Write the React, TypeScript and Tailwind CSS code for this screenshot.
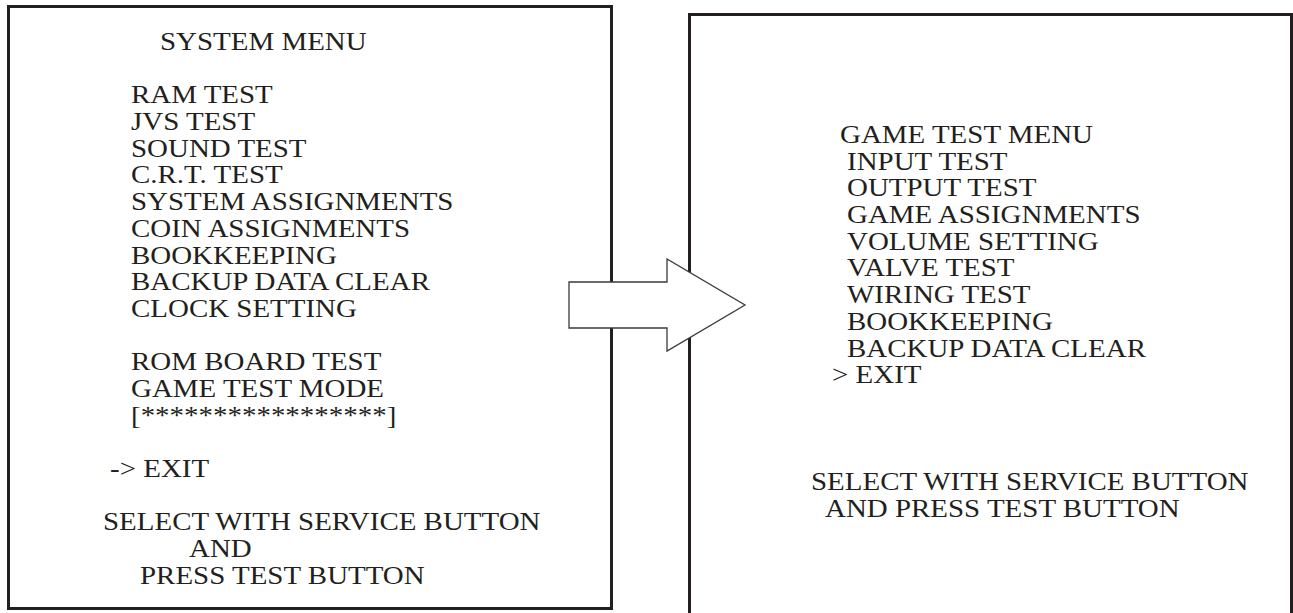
type Row = { text?: string; indent?: string };

// left screen: system menu
const systemMenu: Row[] = [
  { text: 'SYSTEM MENU', indent: 'pl-[150px]' },
  {},
  { text: 'RAM TEST', indent: 'pl-[121px]' },
  { text: 'JVS TEST', indent: 'pl-[121px]' },
  { text: 'SOUND TEST', indent: 'pl-[121px]' },
  { text: 'C.R.T. TEST', indent: 'pl-[121px]' },
  { text: 'SYSTEM ASSIGNMENTS', indent: 'pl-[121px]' },
  { text: 'COIN ASSIGNMENTS', indent: 'pl-[121px]' },
  { text: 'BOOKKEEPING', indent: 'pl-[121px]' },
  { text: 'BACKUP DATA CLEAR', indent: 'pl-[121px]' },
  { text: 'CLOCK SETTING', indent: 'pl-[121px]' },
  {},
  { text: 'ROM BOARD TEST', indent: 'pl-[121px]' },
  { text: 'GAME TEST MODE', indent: 'pl-[121px]' },
  { text: '[*****************]', indent: 'pl-[121px]' },
  {},
  { text: '-> EXIT', indent: 'pl-[100px]' },
  {},
  { text: 'SELECT WITH SERVICE BUTTON', indent: 'pl-[93px]' },
  { text: 'AND', indent: 'pl-[179px]' },
  { text: 'PRESS TEST BUTTON', indent: 'pl-[130px]' },
];

// right screen: game test menu
const gameTestMenu: Row[] = [
  { text: 'GAME TEST MENU', indent: 'pl-[149px]' },
  { text: 'INPUT TEST', indent: 'pl-[156px]' },
  { text: 'OUTPUT TEST', indent: 'pl-[156px]' },
  { text: 'GAME ASSIGNMENTS', indent: 'pl-[156px]' },
  { text: 'VOLUME SETTING', indent: 'pl-[156px]' },
  { text: 'VALVE TEST', indent: 'pl-[156px]' },
  { text: 'WIRING TEST', indent: 'pl-[156px]' },
  { text: 'BOOKKEEPING', indent: 'pl-[156px]' },
  { text: 'BACKUP DATA CLEAR', indent: 'pl-[156px]' },
  { text: '> EXIT', indent: 'pl-[141px]' },
  {},
  {},
  {},
  { text: 'SELECT WITH SERVICE BUTTON', indent: 'pl-[120px]' },
  { text: 'AND PRESS TEST BUTTON', indent: 'pl-[134px]' },
];

function Line({ text, indent }: Row) {
  return (
    <div className={`h-[26.7px] whitespace-pre ${indent ?? ''}`}>
      {text && <span className="inline-block origin-left scale-x-[1.135]">{text}</span>}
    </div>
  );
}

function Arrow() {
  return (
    <svg
      className="absolute left-[568px] top-[258px]"
      width="180"
      height="95"
      viewBox="0 0 180 95"
    >
      <polygon
        points="1,24 99,24 99,1 177,47 99,93 99,70 1,70"
        fill="#fff"
        stroke="#3a3a3a"
        strokeWidth="1.3"
        strokeLinejoin="miter"
      />
    </svg>
  );
}

export default function App() {
  return (
    <div className="relative flex h-[613px] w-[1293px] items-start overflow-hidden bg-white font-['Liberation_Serif',serif] text-[25.5px] leading-[26.7px] text-[#231f20]">
      <div className="ml-[7px] mt-[5px] h-[605px] w-[606px] shrink-0 border-[3px] border-[#231f20] pt-[21px]">
        {systemMenu.map((row, i) => (
          <Line key={i} {...row} />
        ))}
      </div>

      <div className="ml-[75px] mt-[13px] h-[640px] w-[605px] shrink-0 border-x-[3px] border-t-[3px] border-[#231f20] pt-[106px]">
        {gameTestMenu.map((row, i) => (
          <Line key={i} {...row} />
        ))}
      </div>

      <Arrow />
    </div>
  );
}
